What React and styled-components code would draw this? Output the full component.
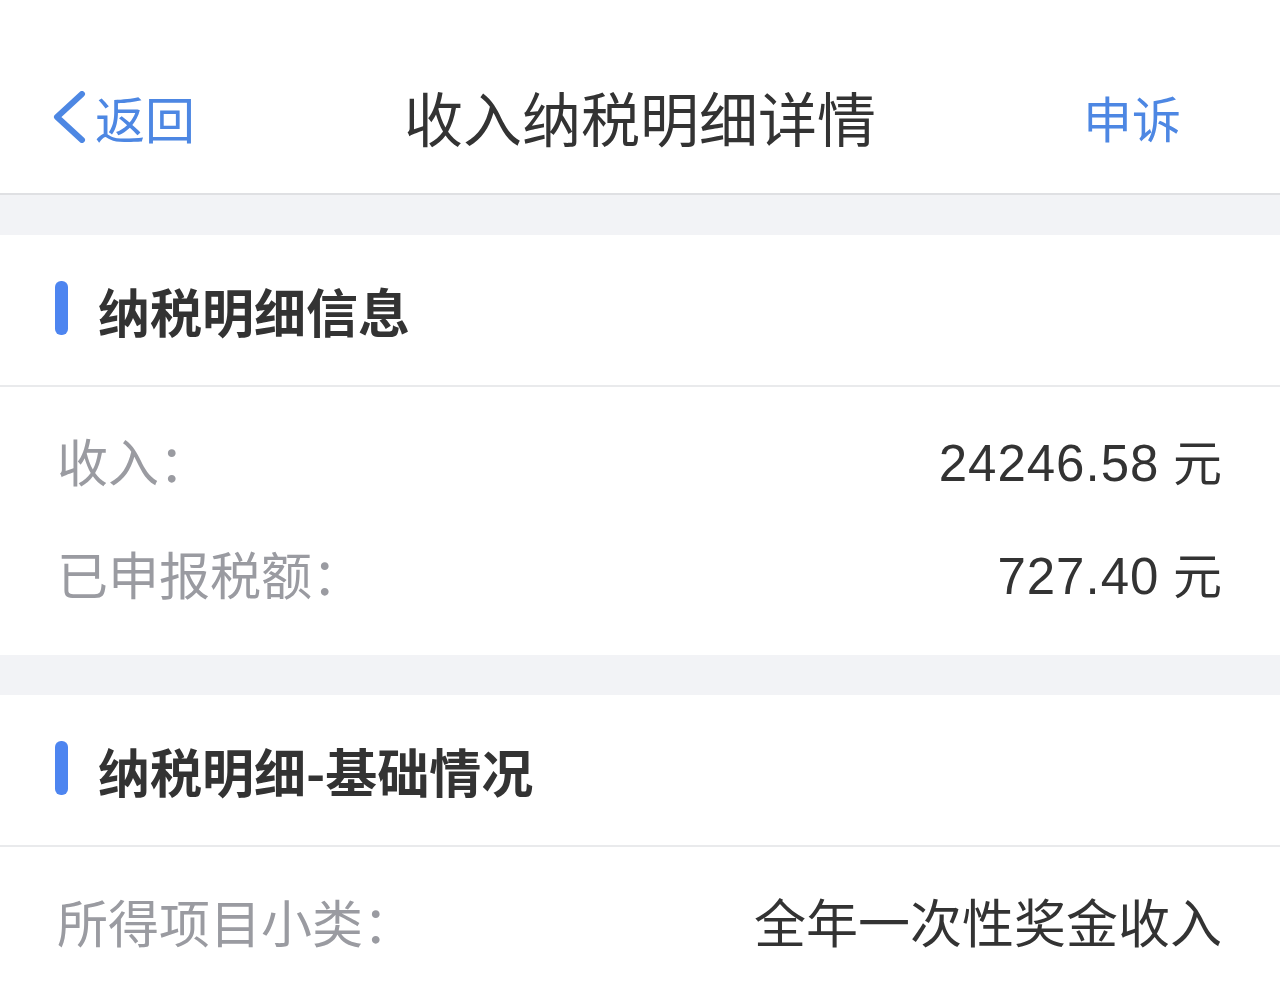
import React from 'react';
import styled, { createGlobalStyle } from 'styled-components';

const GlobalStyle = createGlobalStyle`
  html, body {
    margin: 0;
    padding: 0;
    background: #ffffff;
    font-family: "Noto Sans CJK SC", "Noto Sans", sans-serif;
  }
`;

const Page = styled.div`
  width: 1280px;
  min-height: 996px;
  background: #ffffff;
  overflow: hidden;
`;

const NavBar = styled.header`
  height: 153px;
  padding-top: 40px;
  display: grid;
  grid-template-columns: 1fr auto 1fr;
  align-items: center;
  border-bottom: 2px solid #dfe0e3;
  background: #fff;
`;

const BackLink = styled.a`
  display: flex;
  align-items: center;
  gap: 9px;
  padding-left: 52px;
  color: #4d87e3;
  font-size: 50px;
  text-decoration: none;
  justify-self: start;
`;

const NavTitle = styled.h1`
  margin: 0;
  font-size: 59px;
  font-weight: 400;
  color: #333333;
`;

const Appeal = styled.a`
  justify-self: end;
  padding-right: 99px;
  color: #4d87e3;
  font-size: 49px;
`;

const Gap = styled.div`
  height: 40px;
  background: #f2f3f6;
`;

const SectionHead = styled.div`
  height: 150px;
  display: flex;
  align-items: center;
  gap: 30px;
  padding-left: 55px;
  border-bottom: 2px solid #e9eaec;
  background: #fff;
`;

const Bar = styled.span`
  width: 13px;
  height: 54px;
  margin-bottom: 4px;
  border-radius: 6px;
  background: #4d85f0;
`;

const SectionTitle = styled.h2`
  margin: 0;
  font-size: 52px;
  font-weight: 700;
  color: #333333;
`;

const Body = styled.div`
  padding: ${p => p.$pad || '16px 0 26px'};
`;

const Row = styled.div`
  height: 113px;
  display: flex;
  align-items: center;
  justify-content: space-between;
  padding: 0 58px 0 57px;
`;

const Label = styled.span`
  font-size: 51px;
  color: #9a9ba1;
`;

const Value = styled.span`
  font-family: "Liberation Sans", "Noto Sans CJK SC", sans-serif;
  font-size: ${p => p.$size || 49}px;
  color: #333333;
`;

const Num = styled.span`
  font-size: 51px;
  letter-spacing: 1px;
`;

const Chevron = () => (
  <svg width="34" height="52" viewBox="0 0 34 52" fill="none">
    <path d="M30 3 L5 26 L30 49" stroke="#4d87e3" strokeWidth="6" strokeLinecap="round" strokeLinejoin="round" />
  </svg>
);

export default function App() {
  return (
    <Page>
      <GlobalStyle />
      <NavBar>
        <BackLink><Chevron />返回</BackLink>
        <NavTitle>收入纳税明细详情</NavTitle>
        <Appeal>申诉</Appeal>
      </NavBar>
      <Gap />
      <SectionHead>
        <Bar />
        <SectionTitle>纳税明细信息</SectionTitle>
      </SectionHead>
      <Body>
        <Row>
          <Label>收入：</Label>
          <Value><Num>24246.58</Num> 元</Value>
        </Row>
        <Row>
          <Label>已申报税额：</Label>
          <Value><Num>727.40</Num> 元</Value>
        </Row>
      </Body>
      <Gap />
      <SectionHead>
        <Bar />
        <SectionTitle>纳税明细-基础情况</SectionTitle>
      </SectionHead>
      <Body $pad="17px 0 0">
        <Row>
          <Label>所得项目小类：</Label>
          <Value $size={52}>全年一次性奖金收入</Value>
        </Row>
      </Body>
    </Page>
  );
}
